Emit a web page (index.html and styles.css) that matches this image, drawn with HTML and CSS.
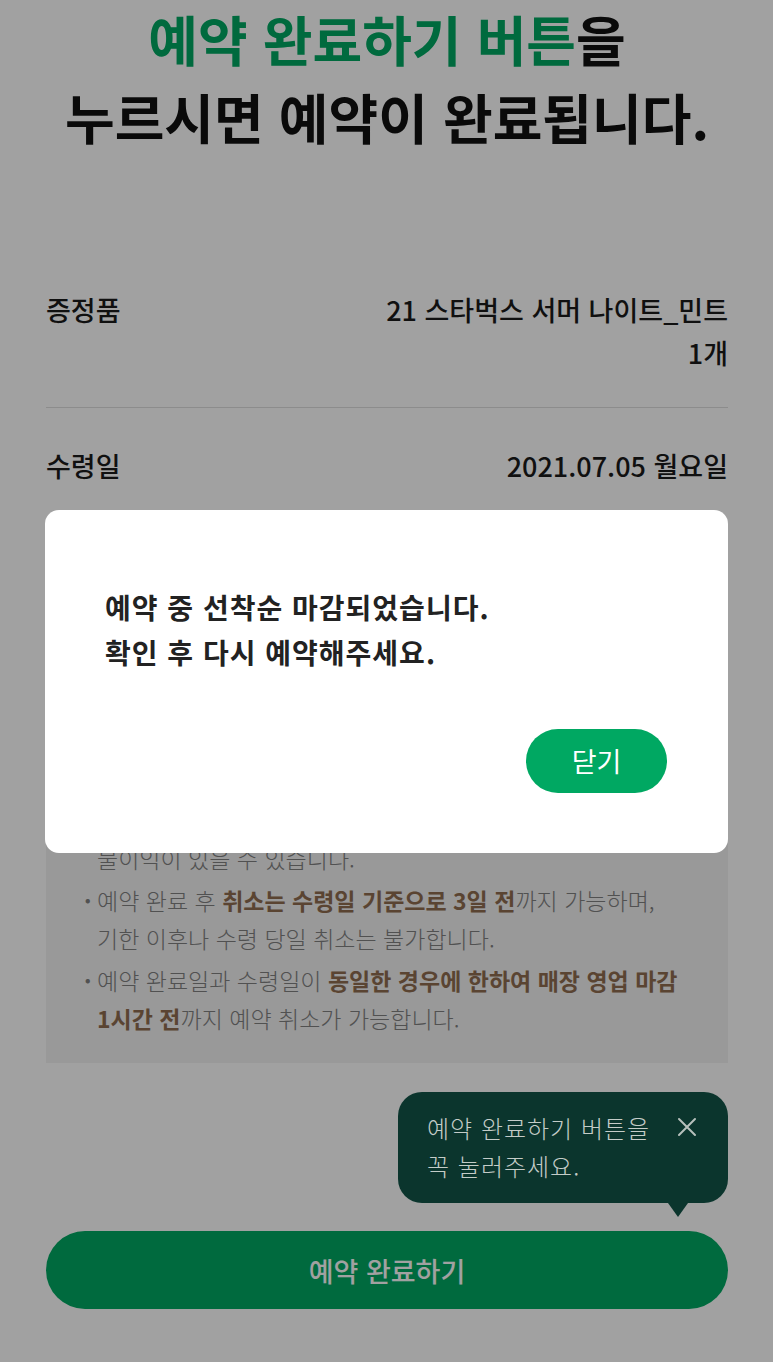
FILE: index.html
```html
<!DOCTYPE html>
<html lang="ko">
<head>
<meta charset="utf-8">
<title>예약 완료</title>
<link rel="stylesheet" href="styles.css">
</head>
<body>
<main class="page">
  <h1 class="headline"><span class="headline-accent">예약 완료하기 버튼</span>을<br>누르시면 예약이 완료됩니다.</h1>

  <dl class="info">
    <div class="info-row">
      <dt class="info-label">증정품</dt>
      <dd class="info-value"><span class="info-line">21 스타벅스 서머 나이트_민트</span><span class="info-line">1개</span></dd>
    </div>
    <div class="info-row">
      <dt class="info-label">수령일</dt>
      <dd class="info-value">2021.07.05 월요일</dd>
    </div>
  </dl>

  <section class="notice">
    <h2 class="notice-title">유의사항</h2>
    <ul class="notice-list">
      <li class="notice-item"><span>예약 완료 후 미수령 시 다음 이벤트 참여에<br>불이익이 있을 수 있습니다.</span></li>
      <li class="notice-item"><span>예약 완료 후 <b class="em">취소는 수령일 기준으로 3일 전</b>까지 가능하며,<br>기한 이후나 수령 당일 취소는 불가합니다.</span></li>
      <li class="notice-item"><span>예약 완료일과 수령일이 <b class="em">동일한 경우에 한하여 매장 영업 마감<br>1시간 전</b>까지 예약 취소가 가능합니다.</span></li>
    </ul>
  </section>

  <div class="cta">
    <div class="tooltip">
      <p class="tooltip-text">예약 완료하기 버튼을<br>꼭 눌러주세요.</p>
      <span class="tooltip-close">
        <svg width="20" height="20" viewBox="0 0 20 20"><path d="M2 2 L18 18 M18 2 L2 18" stroke="#b7c0bc" stroke-width="2" fill="none" stroke-linecap="round"/></svg>
      </span>
    </div>
    <button class="cta-btn" type="button">예약 완료하기</button>
  </div>
</main>

<div class="dim">
  <div class="modal">
    <p class="modal-text">예약 중 선착순 마감되었습니다.<br>확인 후 다시 예약해주세요.</p>
    <div class="modal-actions">
      <button class="modal-btn" type="button">닫기</button>
    </div>
  </div>
</div>
</body>
</html>
```

FILE: styles.css
```css
* { box-sizing: border-box; }

html, body {
  margin: 0;
  padding: 0;
  background: #ffffff;
}

body {
  font-family: "Noto Sans CJK KR", "Noto Sans", sans-serif;
  color: #1a1a1a;
}

.page {
  padding: 0 45px 30px 46px;
}

.headline {
  margin: 0;
  font-size: 54px;
  line-height: 78px;
  font-weight: 700;
  letter-spacing: 0;
  text-align: center;
  color: #111111;
}

.headline-accent {
  color: #00a862;
}

.info {
  margin: 96px 0 0;
  padding: 0;
}

.info-row {
  display: flex;
  justify-content: space-between;
  align-items: flex-start;
  padding: 36px 0 33px;
}

.info-row + .info-row {
  border-top: 1px solid #dedede;
}

.info-label,
.info-value {
  margin: 0;
  font-size: 27px;
  line-height: 43px;
  font-weight: 500;
  color: #1a1a1a;
}

.info-value {
  text-align: right;
}

.info-line {
  display: block;
}

.notice {
  margin-top: 160px;
  padding: 30px 38px 26px;
  background: #f2f2f2;
}

.notice-title {
  margin: 0 0 53px;
  font-size: 24px;
  line-height: 38px;
  font-weight: 700;
  color: #333333;
}

.notice-list {
  margin: 0;
  padding: 0;
  list-style: none;
  display: flex;
  flex-direction: column;
  gap: 4px;
}

.notice-item {
  display: flex;
  font-size: 23px;
  line-height: 38px;
  font-weight: 300;
  color: #808080;
}

.notice-item::before {
  content: "·";
  flex: 0 0 13px;
  font-weight: 700;
}

.em {
  font-weight: 700;
  color: #8f6d50;
}

.cta {
  position: relative;
  margin-top: 168px;
}

.cta-btn {
  display: block;
  width: 100%;
  height: 78px;
  border: 0;
  border-radius: 39px;
  background: #00a862;
  color: #ffffff;
  font-family: inherit;
  font-size: 27px;
  font-weight: 500;
}

.tooltip {
  position: absolute;
  right: 0;
  bottom: calc(100% + 28px);
  z-index: 20;
  width: 330px;
  height: 111px;
  padding: 17px 31px 0 29px;
  display: flex;
  justify-content: space-between;
  align-items: flex-start;
  background: #0b352d;
  border-radius: 24px;
}

.tooltip::after {
  content: "";
  position: absolute;
  right: 40px;
  top: 100%;
  border-left: 10px solid transparent;
  border-right: 10px solid transparent;
  border-top: 14px solid #0b352d;
}

.tooltip-text {
  margin: 0;
  font-size: 24px;
  line-height: 38px;
  font-weight: 300;
  letter-spacing: 1px;
  color: #c4ccc8;
}

.tooltip-close {
  display: flex;
  margin-top: 8px;
}

.dim {
  position: fixed;
  inset: 0;
  z-index: 10;
  display: flex;
  align-items: center;
  justify-content: center;
  background: rgba(0, 0, 0, 0.37);
}

.modal {
  width: 683px;
  padding: 75px 61px 60px 60px;
  background: #ffffff;
  border-radius: 14px;
}

.modal-text {
  margin: 0;
  font-size: 28px;
  line-height: 45px;
  font-weight: 700;
  letter-spacing: 1px;
  color: #222222;
}

.modal-actions {
  display: flex;
  justify-content: flex-end;
  margin-top: 54px;
}

.modal-btn {
  width: 141px;
  height: 64px;
  border: 0;
  border-radius: 32px;
  background: #00a862;
  color: #ffffff;
  font-family: inherit;
  font-size: 27px;
  font-weight: 400;
}
```
